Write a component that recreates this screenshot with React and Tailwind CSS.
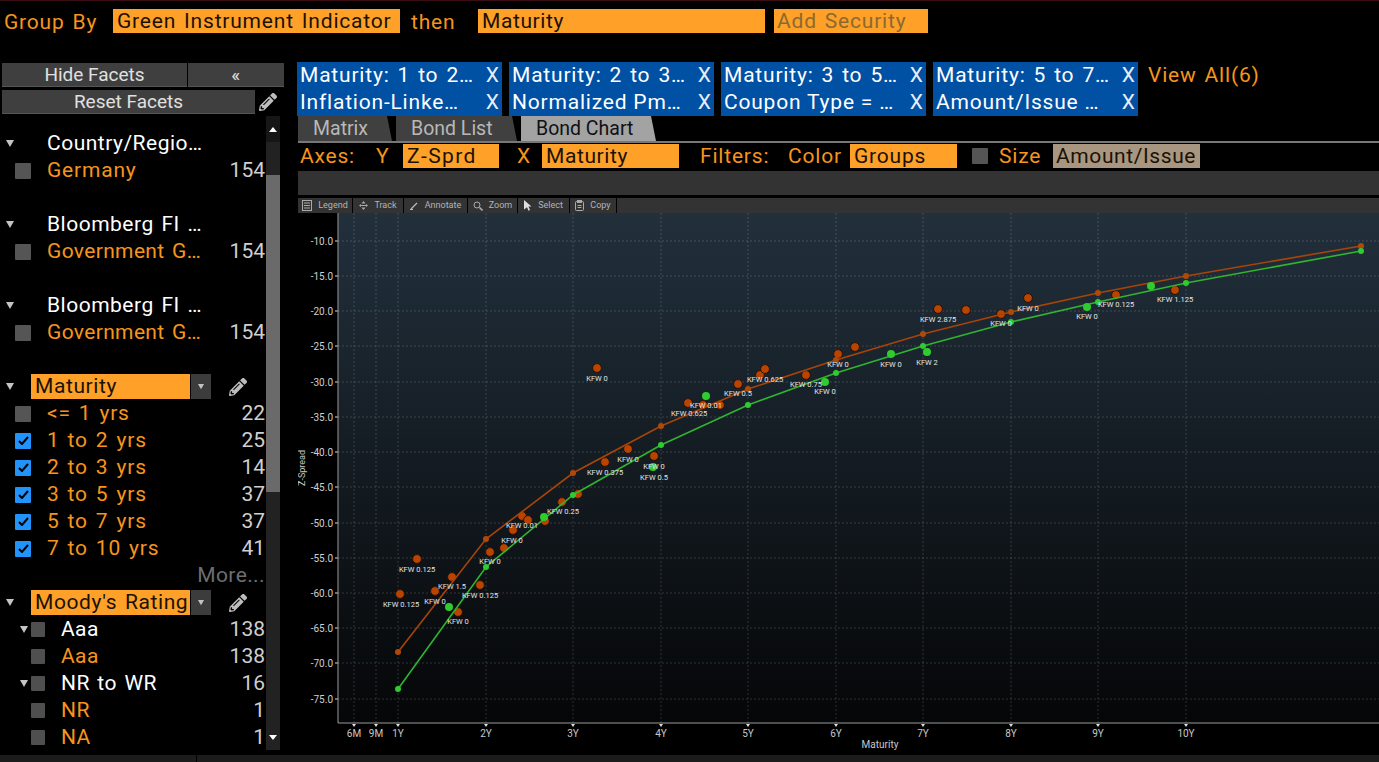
import React from "react";
import { FaPencilAlt } from "react-icons/fa";

const chips = [
  ["Maturity: 1 to 2…", "Inflation-Linke…"],
  ["Maturity: 2 to 3…", "Normalized Pm…"],
  ["Maturity: 3 to 5…", "Coupon Type = …"],
  ["Maturity: 5 to 7…", "Amount/Issue …"],
];

const tools = [
  { label: "Legend", w: "w-[55px]", icon: <LegendIcon /> },
  { label: "Track", w: "w-[51px]", icon: <TrackIcon /> },
  { label: "Annotate", w: "w-[64px]", icon: <AnnotateIcon /> },
  { label: "Zoom", w: "w-[50px]", icon: <ZoomIcon /> },
  { label: "Select", w: "w-[52px]", icon: <SelectIcon /> },
  { label: "Copy", w: "w-[47px]", icon: <CopyIcon /> },
];

const yTicks = [
  [-10, 241], [-15, 276], [-20, 311], [-25, 346], [-30, 382], [-35, 417], [-40, 452],
  [-45, 487], [-50, 523], [-55, 558], [-60, 593], [-65, 628], [-70, 663], [-75, 699],
];
const xTicks = [
  ["6M", 354], ["9M", 376], ["1Y", 398], ["2Y", 486], ["3Y", 573], ["4Y", 661], ["5Y", 748],
  ["6Y", 836], ["7Y", 923], ["8Y", 1011], ["9Y", 1098], ["10Y", 1186],
];

const brownLine = [[398,652],[486,539],[573,473],[661,426],[748,389],[836,360],[923,334],[1011,312],[1098,293],[1186,276],[1361,246]];
const greenLine = [[398,689],[486,567],[573,495],[661,445],[748,405],[836,373],[923,346],[1011,322],[1098,302],[1186,283],[1361,251]];

const brownDots = [
  [400,594],[417,559],[435,591],[452,577],[458,612],[480,585],[490,552],[504,548],[513,530],[522,516],
  [528,520],[545,521],[562,502],[578,494],[597,368],[605,462],[628,449],[654,456],[688,403],[703,405],
  [720,405],[738,384],[760,375],[765,369],[806,375],[838,354],[855,347],[938,309],[966,310],[1001,314],
  [1028,298],[1116,295],[1175,290],
];
const greenDots = [[449,607],[544,517],[653,467],[706,396],[825,382],[891,354],[927,352],[1087,307],[1151,286]];

const labels = [
  ["KFW 0.125",417,572],["KFW 0.125",401,607],["KFW 1.5",452,589],["KFW 0",435,604],["KFW 0.125",480,598],
  ["KFW 0",458,624],["KFW 0",490,564],["KFW 0",512,543],["KFW 0.01",522,528],["KFW 0.25",563,514],
  ["KFW 0.375",605,475],["KFW 0",628,462],["KFW 0",654,469],["KFW 0.5",654,480],["KFW 0",597,381],
  ["KFW 0.625",689,416],["KFW 0.01",706,408],["KFW 0.5",738,396],["KFW 0.625",765,382],["KFW 0.75",806,387],
  ["KFW 0",825,394],["KFW 0",838,367],["KFW 0",891,367],["KFW 2",927,365],["KFW 2.875",938,322],
  ["KFW 0",1001,326],["KFW 0",1028,311],["KFW 0",1087,319],["KFW 0.125",1116,307],["KFW 1.125",1175,302],
];

function LegendIcon() {
  return (
    <svg width="10" height="11" viewBox="0 0 10 11" fill="none" stroke="#aaa" strokeWidth="1">
      <rect x="0.5" y="0.5" width="9" height="10" />
      <path d="M2 3h6M2 5.5h6M2 8h6" />
    </svg>
  );
}
function TrackIcon() {
  return (
    <svg width="9" height="9" viewBox="0 0 9 9" fill="#aaa">
      <path d="M4.5 0 6.5 2.5H2.5zM4.5 9 2.5 6.5h4zM0 4.5 2 3v3zM9 4.5 7 6V3z" />
      <path d="M1 4h7v1H1z" />
    </svg>
  );
}
function AnnotateIcon() {
  return (
    <svg width="9" height="9" viewBox="0 0 9 9" fill="none" stroke="#bbb" strokeWidth="1.3">
      <path d="M1 8 7 2" />
      <path d="M0 8.5h3" strokeWidth="1" />
    </svg>
  );
}
function ZoomIcon() {
  return (
    <svg width="10" height="10" viewBox="0 0 10 10" fill="none" stroke="#aaa" strokeWidth="1">
      <circle cx="4" cy="4" r="3" />
      <path d="M6.5 6.5 9.5 9.5" strokeWidth="1.6" />
    </svg>
  );
}
function SelectIcon() {
  return (
    <svg width="8" height="11" viewBox="0 0 8 11" fill="#ddd">
      <path d="M0 0 7.5 6.5H4.5L6 10l-1.5.7L3 7.2 0 9.5z" />
    </svg>
  );
}
function CopyIcon() {
  return (
    <svg width="9" height="11" viewBox="0 0 9 11" fill="none" stroke="#aaa" strokeWidth="1">
      <rect x="0.5" y="1.5" width="8" height="9" rx="1" />
      <rect x="2.5" y="0.5" width="4" height="2" fill="#aaa" />
      <path d="M2.5 5.5h4M2.5 7.5h4" />
    </svg>
  );
}

function Box({ checked, small }) {
  if (checked) {
    return (
      <span className="flex h-[16px] w-[16px] shrink-0 items-center justify-center rounded-[1px] bg-[#2094fa]">
        <svg width="11" height="9" viewBox="0 0 11 9" fill="none" stroke="#000" strokeWidth="2">
          <path d="M1 5l3 3 6-7" />
        </svg>
      </span>
    );
  }
  return (
    <span
      className={
        small
          ? "block h-[15px] w-[14px] shrink-0 rounded-[1px] bg-[#4f4f4f]"
          : "block h-[16px] w-[16px] shrink-0 rounded-[1px] bg-[#555555]"
      }
    />
  );
}

function Caret({ className }) {
  return (
    <span
      className={
        "block h-0 w-0 border-x-[4px] border-t-[7px] border-x-transparent border-t-[#c4c4c4] " + className
      }
    />
  );
}

function Count({ n }) {
  return <span className="ml-auto mr-px tracking-normal text-[#cfcfcf]">{n}</span>;
}

function GroupRow({ label }) {
  return (
    <div className="flex h-[27px] items-center pl-[6px]">
      <Caret className="" />
      <span className="ml-[33px] tracking-[0.5px] text-white">{label}</span>
    </div>
  );
}

function ItemRow({ label, count, checked, tight }) {
  return (
    <div className="flex h-[27px] items-center pl-[15px]">
      <Box checked={checked} />
      <span className={"ml-[16px] text-[#f7941d]" + (tight ? " tracking-[0.35px]" : "")}>{label}</span>
      <Count n={count} />
    </div>
  );
}

function SubGroupRow({ label, count }) {
  return (
    <div className="flex h-[27px] items-center pl-[20px]">
      <Caret className="mr-[3px]" />
      <Box small />
      <span className="ml-[16px] tracking-[0.4px] text-white">{label}</span>
      <Count n={count} />
    </div>
  );
}

function SubItemRow({ label, count }) {
  return (
    <div className="flex h-[27px] items-center pl-[31px]">
      <Box small />
      <span className="ml-[16px] tracking-[0.4px] text-[#f7941d]">{label}</span>
      <Count n={count} />
    </div>
  );
}

function SelectRow({ label }) {
  return (
    <div className="flex h-[27px] items-center pl-[6px]">
      <Caret className="" />
      <div className="ml-[17px] flex h-[25px] w-[159px] items-center bg-[#ffa028] pl-[4px] tracking-[0.6px] text-[#1a1205]">{label}</div>
      <div className="ml-px flex h-[25px] w-[20px] items-center justify-center bg-[#3c3c3c]">
        <Caret className="scale-75" />
      </div>
      <FaPencilAlt className="ml-[18px] text-[#bdbdbd]" size={18} />
    </div>
  );
}

function Sidebar() {
  return (
    <aside className="flex w-[298px] shrink-0 flex-col">
      <div className="flex gap-px pl-[2px]">
        <button className="h-[24px] w-[185px] border-b border-[#555] bg-[#3f3f3f] text-[19px] leading-[24px] tracking-normal text-[#e0e0e0]">
          Hide Facets
        </button>
        <button className="h-[24px] w-[96px] border-b border-[#555] bg-[#3f3f3f] text-[19px] leading-[22px] text-[#e0e0e0]">
          «
        </button>
      </div>
      <div className="mt-[3px] flex items-center pl-[2px]">
        <button className="h-[24px] w-[253px] border-b border-[#555] bg-[#3f3f3f] text-[19px] leading-[24px] tracking-normal text-[#e0e0e0]">
          Reset Facets
        </button>
        <FaPencilAlt className="ml-[4px] text-[#bdbdbd]" size={18} />
      </div>
      <div className="mt-[2px] flex min-h-0 flex-1">
        <div className="w-[266px] pt-[14px]">
          <GroupRow label="Country/Regio…" />
          <ItemRow label="Germany" count="154" />
          <div className="h-[27px]" />
          <GroupRow label="Bloomberg FI …" />
          <ItemRow label="Government G…" count="154" tight />
          <div className="h-[27px]" />
          <GroupRow label="Bloomberg FI …" />
          <ItemRow label="Government G…" count="154" tight />
          <div className="h-[27px]" />
          <SelectRow label="Maturity" />
          <ItemRow label="<= 1 yrs" count="22" />
          <ItemRow label="1 to 2 yrs" count="25" checked />
          <ItemRow label="2 to 3 yrs" count="14" checked />
          <ItemRow label="3 to 5 yrs" count="37" checked />
          <ItemRow label="5 to 7 yrs" count="37" checked />
          <ItemRow label="7 to 10 yrs" count="41" checked />
          <div className="flex h-[27px] items-center justify-end pr-px tracking-[0.4px] text-[#6e6e6e]">More...</div>
          <SelectRow label="Moody's Rating" />
          <SubGroupRow label="Aaa" count="138" />
          <SubItemRow label="Aaa" count="138" />
          <SubGroupRow label="NR to WR" count="16" />
          <SubItemRow label="NR" count="1" />
          <SubItemRow label="NA" count="1" />
        </div>
        <div className="flex h-[634px] w-[14px] flex-col bg-[#222222]">
          <div className="flex h-[26px] items-center justify-center bg-[#161616]">
            <span className="block h-0 w-0 border-x-[4px] border-b-[5px] border-x-transparent border-b-white" />
          </div>
          <div className="mt-[33px] h-[317px] bg-[#6a6a6a]" />
          <div className="mt-auto flex h-[26px] items-center justify-center">
            <span className="block h-0 w-0 border-x-[4px] border-t-[5px] border-x-transparent border-t-white" />
          </div>
        </div>
      </div>
    </aside>
  );
}

function Chip({ children, second }) {
  return (
    <div
      className={
        "flex h-[27px] items-center justify-between pl-[3px] pr-[3px] text-white" +
        (second ? " [word-spacing:0]" : "")
      }
    >
      <span>{children}</span>
      <span className="tracking-normal text-[#e8eef8]">X</span>
    </div>
  );
}

function Tab({ label, active, w }) {
  return (
    <div
      className={
        w +
        " flex h-[25px] items-center pl-[15px] text-[19.5px] tracking-normal [word-spacing:0] [clip-path:polygon(0_0,calc(100%-5px)_0,100%_100%,0_100%)] " +
        (active ? "bg-[#a3a3a3] text-[#111]" : "bg-[#404040] text-[#b8b8b8]")
      }
    >
      {label}
    </div>
  );
}

function Chart() {
  return (
    <svg
      viewBox="298 213 1081 542"
      className="block h-[542px] w-[1081px] tracking-normal [word-spacing:0]"
      style={{ fontFamily: "Roboto, sans-serif" }}
    >
      <defs>
        <linearGradient id="plotBg" x1="0" y1="0" x2="0" y2="1">
          <stop offset="0" stopColor="#22303c" />
          <stop offset="1" stopColor="#050607" />
        </linearGradient>
      </defs>
      <rect x="338" y="213" width="1041" height="510" fill="url(#plotBg)" />
      {yTicks.map(([v, y]) => (
        <g key={v}>
          <line x1="338" x2="1379" y1={y} y2={y} stroke="#ffffff" strokeOpacity="0.16" strokeDasharray="2 2" />
          <line x1="335" x2="338" y1={y} y2={y} stroke="#ddd" />
          <text x="333" y={y + 3.5} textAnchor="end" fontSize="10" fill="#d0d0d0">
            {v.toFixed(1)}
          </text>
        </g>
      ))}
      {xTicks.map(([l, x]) => (
        <g key={l}>
          <line x1={x} x2={x} y1="213" y2="723" stroke="#ffffff" strokeOpacity="0.16" strokeDasharray="2 2" />
          <path d={`M${x - 2} 724h4l-2 3z`} fill="#ddd" />
          <text x={x} y="737" textAnchor="middle" fontSize="10" fill="#c8c8c8">
            {l}
          </text>
        </g>
      ))}
      <path d="M338 213V723H1379" fill="none" stroke="#9a9a9a" />
      <text x="880" y="748" textAnchor="middle" fontSize="10" fill="#c8c8c8">
        Maturity
      </text>
      <text transform="translate(305 468) rotate(-90)" textAnchor="middle" fontSize="9" fill="#c8c8c8">
        Z-Spread
      </text>

      {brownDots.map(([x, y], i) => (
        <circle key={i} cx={x} cy={y} r="4.4" fill="#b84400" stroke="#2a1208" strokeWidth="1" />
      ))}
      <polyline points={brownLine.join(" ")} fill="none" stroke="#a84408" strokeWidth="1.6" />
      {brownLine.map(([x, y], i) => (
        <circle key={i} cx={x} cy={y} r="3" fill="#b04808" />
      ))}
      <polyline points={greenLine.join(" ")} fill="none" stroke="#2fb52f" strokeWidth="1.6" />
      {greenLine.map(([x, y], i) => (
        <circle key={i} cx={x} cy={y} r="3" fill="#2ecc2e" />
      ))}
      {greenDots.map(([x, y], i) => (
        <circle key={i} cx={x} cy={y} r="4" fill="#2ecc2e" />
      ))}
      {labels.map(([t, x, y], i) => (
        <text key={i} x={x} y={y} textAnchor="middle" fontSize="7.5" fill="#e4e4e4">
          {t}
        </text>
      ))}
    </svg>
  );
}

export default function App() {
  return (
    <div
      className="flex h-[762px] w-[1379px] flex-col overflow-hidden bg-black text-[21px] tracking-[0.8px] [word-spacing:2px]"
      style={{ fontFamily: "Roboto, sans-serif" }}
    >
      <header className="flex h-[63px] shrink-0 items-start border-t border-[#3a0c14] pt-[8px] text-[#f7941d]">
        <span className="ml-[4px] w-[109px] pt-px leading-[24px]">Group By</span>
        <div className="flex h-[24px] w-[287px] items-center bg-[#ffa028] pl-[4px] pt-[2px] text-[#1a1205]">
          Green Instrument Indicator
        </div>
        <span className="ml-[11px] w-[67px] pt-px leading-[24px]">then</span>
        <div className="flex h-[24px] w-[287px] items-center bg-[#ffa028] pl-[4px] pt-[2px] tracking-[0.6px] text-[#1a1205]">Maturity</div>
        <div className="ml-[9px] flex h-[24px] w-[154px] items-center bg-[#ffa028] pl-[3px] pt-[2px] text-[#8a6a30]">
          Add Security
        </div>
      </header>

      <main className="flex min-h-0 flex-1">
        <Sidebar />
        <section className="flex min-w-0 flex-1 flex-col">
          <div className="-ml-px -mt-px flex h-[54px] shrink-0 items-start">
            {chips.map((c) => (
              <div key={c[0]} className="mr-[7px] h-[54px] w-[205px] shrink-0 bg-[#0050a4]">
                <Chip>{c[0]}</Chip>
                <Chip second>{c[1]}</Chip>
              </div>
            ))}
            <span className="ml-[3px] leading-[26px] text-[#f7941d]">View All(6)</span>
          </div>

          <div className="flex h-[25px] shrink-0 gap-[4px]">
            <Tab label="Matrix" w="w-[94px]" />
            <Tab label="Bond List" w="w-[121px]" />
            <Tab label="Bond Chart" active w="w-[135px]" />
          </div>
          <div className="h-[2px] shrink-0 bg-[#777777]" />

          <div className="flex h-[28px] shrink-0 items-center pb-[2px] text-[#f7941d]">
            <span className="ml-[2px] w-[76px] pt-[2px]">Axes:</span>
            <span className="w-[27px] pt-[2px]">Y</span>
            <div className="flex h-[24px] w-[96px] items-center bg-[#ffa028] pl-[4px] pt-[2px] tracking-[1.4px] text-[#1a1205]">Z-Sprd</div>
            <span className="ml-[18px] w-[25px] pt-[2px]">X</span>
            <div className="flex h-[24px] w-[137px] items-center bg-[#ffa028] pl-[4px] pt-[2px] tracking-[0.6px] text-[#1a1205]">Maturity</div>
            <span className="ml-[21px] w-[88px] pt-[2px]">Filters:</span>
            <span className="w-[62px] pt-[2px]">Color</span>
            <div className="flex h-[24px] w-[107px] items-center bg-[#ffa028] pl-[4px] pt-[2px] text-[#1a1205]">Groups</div>
            <span className="ml-[15px]">
              <Box />
            </span>
            <span className="ml-[11px] w-[54px] pt-[2px]">Size</span>
            <div className="flex h-[24px] w-[147px] items-center bg-[#a89680] pl-[3px] pt-[2px] tracking-[0.6px] text-[#1a1205]">
              Amount/Issue
            </div>
          </div>

          <div className="h-[24px] shrink-0 bg-[#333333]" />
          <div className="mt-[3px] flex h-[15px] shrink-0 bg-[#333333] text-[9px] tracking-normal text-[#b4b4b4]">
            {tools.map((t) => (
              <div key={t.label} className={t.w + " flex items-center justify-center gap-[6px] border-r border-black"}>
                {t.icon}
                <span>{t.label}</span>
              </div>
            ))}
          </div>
          <Chart />
        </section>
      </main>

      <footer className="flex h-[7px] shrink-0 gap-px">
        <div className="w-[196px] bg-[#1c1c1c]" />
        <div className="flex-1 bg-[#1c1c1c]" />
      </footer>
    </div>
  );
}
